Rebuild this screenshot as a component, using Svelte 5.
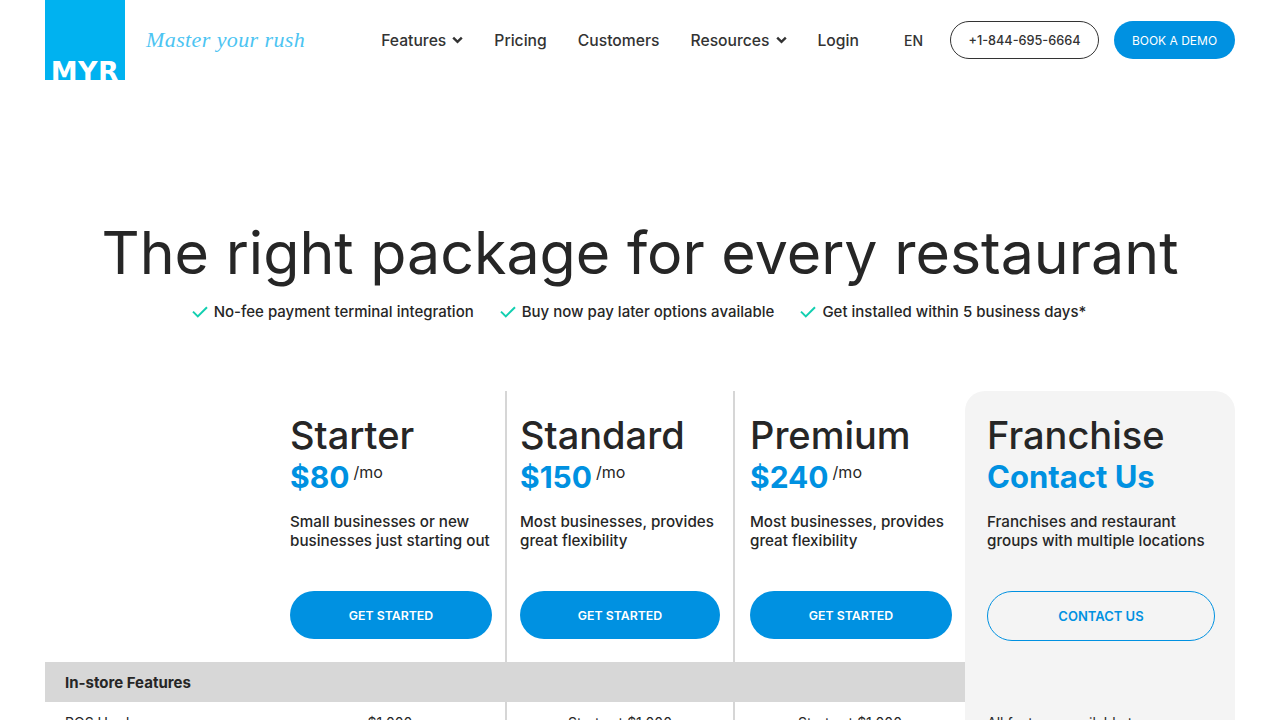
<script>
  const navItems = [
    { label: 'Features', caret: true },
    { label: 'Pricing' },
    { label: 'Customers' },
    { label: 'Resources', caret: true },
    { label: 'Login' }
  ];

  const perks = [
    'No-fee payment terminal integration',
    'Buy now pay later options available',
    'Get installed within 5 business days*'
  ];

  const plans = [
    { name: 'Starter', price: '$80', blurb: 'Small businesses or new businesses just starting out', hardware: '$1,000', cls: 'starter' },
    { name: 'Standard', price: '$150', blurb: 'Most businesses, provides great flexibility', hardware: 'Starts at $1,000', cls: 'standard' },
    { name: 'Premium', price: '$240', blurb: 'Most businesses, provides great flexibility', hardware: 'Starts at $1,000', cls: 'premium' }
  ];
</script>

<header class="topbar">
  <a class="brand" href="#top">
    <span class="logo"><span class="logo-text">MYR</span></span>
    <span class="tagline">Master your rush</span>
  </a>
  <nav class="nav">
    {#each navItems as item}
      <a class="nav-link" href="#top">
        {item.label}
        {#if item.caret}
          <svg class="caret" width="11" height="8" viewBox="0 0 11 8" aria-hidden="true">
            <path d="M1.2 1.6 5.5 5.9 9.8 1.6" fill="none" stroke="#333" stroke-width="2.4" />
          </svg>
        {/if}
      </a>
    {/each}
  </nav>
  <span class="lang">EN</span>
  <a class="phone" href="#top">+1-844-695-6664</a>
  <a class="demo" href="#top">BOOK A DEMO</a>
</header>

<section class="hero">
  <h1>The right package for every restaurant</h1>
  <ul class="perks">
    {#each perks as perk}
      <li>
        <svg width="16" height="12" viewBox="0 0 16 12" aria-hidden="true">
          <path d="M1 5.6 5.8 10.4 15 1.2" fill="none" stroke="#12cfb0" stroke-width="2" />
        </svg>
        {perk}
      </li>
    {/each}
  </ul>
</section>

<section class="pricing">
  <div class="blank"></div>
  {#each plans as plan}
    <div class="plan {plan.cls}">
      <h2>{plan.name}</h2>
      <p class="price">{plan.price}<span>/mo</span></p>
      <p class="blurb">{plan.blurb}</p>
      <a class="cta" href="#top">GET STARTED</a>
    </div>
  {/each}

  <div class="franchise">
    <h2>Franchise</h2>
    <p class="price contact">Contact Us</p>
    <p class="blurb">Franchises and restaurant groups with multiple locations</p>
    <a class="cta outline" href="#top">CONTACT US</a>
    <p class="all">All features available to</p>
  </div>

  <div class="band">In-store Features</div>

  <div class="row-label">POS Hardware</div>
  {#each plans as plan}
    <div class="cell {plan.cls}">{plan.hardware}</div>
  {/each}
</section>

<style>
  :global(body) {
    font-family: Inter, "Noto Sans", sans-serif;
    color: #262626;
    background: #fff;
  }

  a {
    color: inherit;
    text-decoration: none;
  }

  .topbar {
    display: flex;
    align-items: center;
    height: 80px;
    padding: 0 45px;
  }

  .brand {
    display: flex;
    align-items: center;
    gap: 21px;
  }

  .logo {
    display: flex;
    align-items: flex-end;
    justify-content: center;
    width: 80px;
    height: 80px;
    overflow: hidden;
    background: #00b2f0;
  }

  .logo-text {
    font-family: "DejaVu Sans", sans-serif;
    font-weight: 700;
    font-size: 27px;
    line-height: 17px;
    letter-spacing: 0.5px;
    color: #fff;
  }

  .tagline {
    font-family: "Liberation Serif", serif;
    font-style: italic;
    font-size: 22px;
    letter-spacing: 0.4px;
    color: #4cc4f2;
  }

  .nav {
    display: flex;
    align-items: center;
    gap: 31px;
    margin-left: auto;
    font-size: 15.7px;
    font-weight: 500;
    color: #333;
  }

  .nav-link {
    display: flex;
    align-items: center;
    gap: 6px;
  }

  .lang {
    margin-left: 45px;
    font-size: 14px;
    font-weight: 500;
    color: #333;
  }

  .phone,
  .demo {
    display: flex;
    align-items: center;
    justify-content: center;
    box-sizing: border-box;
    height: 38px;
    border-radius: 19px;
  }

  .phone {
    width: 149px;
    margin-left: 27px;
    border: 1px solid #333;
    font-size: 12.7px;
    font-weight: 500;
    color: #333;
  }

  .demo {
    width: 121px;
    margin-left: 15px;
    background: #0091e1;
    color: #fff;
    font-size: 12px;
    font-weight: 400;
  }

  .hero {
    padding-top: 130px;
    text-align: center;
  }

  h1 {
    margin: 0;
    font-size: 59.1px;
    line-height: 86px;
    font-weight: 400;
  }

  .perks {
    display: flex;
    justify-content: center;
    gap: 26px;
    margin: 4px 2px 0 0;
    padding: 0;
    list-style: none;
    font-size: 15px;
    font-weight: 500;
    line-height: 24px;
  }

  .perks li {
    display: flex;
    align-items: center;
    gap: 6px;
  }

  .pricing {
    display: grid;
    grid-template-columns: 230px 230px 228px 232px 270px;
    grid-template-rows: 271px 40px auto;
    margin: 67px 45px 0;
  }

  .plan {
    box-sizing: border-box;
    padding: 24px 13px 0 13px;
  }

  .starter {
    padding-left: 15px;
  }

  .premium {
    padding-left: 15px;
  }

  .standard,
  .premium {
    border-left: 2px solid #d6d6d6;
  }

  h2 {
    margin: 0;
    font-size: 38px;
    line-height: 40px;
    font-weight: 500;
  }

  .price {
    margin: 3px 0 0;
    font-size: 30px;
    line-height: 38px;
    font-weight: 700;
    color: #0091e1;
  }

  .price span {
    margin-left: 4px;
    vertical-align: 10px;
    font-size: 16px;
    line-height: 1;
    font-weight: 400;
    color: #262626;
  }

  .contact {
    font-size: 31px;
  }

  .blurb {
    margin: 16px 0 0;
    height: 79px;
    font-size: 15.2px;
    line-height: 19px;
    font-weight: 500;
  }

  .cta {
    display: flex;
    align-items: center;
    justify-content: center;
    box-sizing: border-box;
    height: 48px;
    border-radius: 24px;
    background: #0091e1;
    color: #fff;
    font-size: 12.3px;
    font-weight: 600;
  }

  .outline {
    height: 50px;
    border: 1px solid #0091e1;
    border-radius: 25px;
    background: none;
    color: #0091e1;
    font-size: 13px;
  }

  .franchise {
    grid-column: 5;
    grid-row: 1 / span 3;
    padding: 24px 20px 30px 22px;
    background: #f4f4f4;
    border-radius: 20px 20px 0 0;
  }

  .all {
    margin: 72px 0 0;
    font-size: 14px;
    line-height: 20px;
  }

  .band {
    grid-column: 1 / span 4;
    grid-row: 2;
    display: flex;
    align-items: center;
    padding-left: 20px;
    background: #d7d7d7;
    font-size: 15px;
    font-weight: 700;
  }

  .row-label,
  .cell {
    padding: 11px 0;
    font-size: 14px;
    line-height: 20px;
  }

  .row-label {
    padding-left: 20px;
  }

  .cell {
    text-align: center;
  }
</style>
